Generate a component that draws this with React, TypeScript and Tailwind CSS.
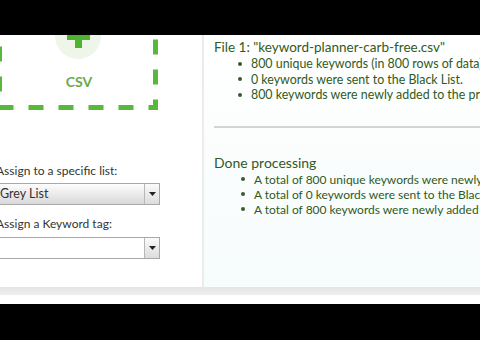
import React from "react";

const GREEN = "text-[#2f5a22]";

function Arrow() {
  return (
    <span className="flex h-full w-[15px] items-center justify-center border-l border-[#b8b8b8] bg-gradient-to-b from-[#fafafa] to-[#dcdcdc]">
      <svg width="7" height="4" viewBox="0 0 7 4">
        <path d="M0 0h7L3.5 4z" fill="#222" />
      </svg>
    </span>
  );
}

function Select({ value, grey }: { value?: string; grey?: boolean }) {
  return (
    <div
      className={`ml-[-4px] flex h-[22px] w-[164px] items-center border border-[#a9a9a9] ${
        grey ? "bg-gradient-to-b from-[#fdfdfd] to-[#d9d9d9]" : "bg-white"
      }`}
    >
      <span className="flex-1 pl-[3px] text-[12.5px] text-[#333]">{value}</span>
      <Arrow />
    </div>
  );
}

export default function App() {
  const file = [
    "800 unique keywords (in 800 rows of data) were found.",
    "0 keywords were sent to the Black List.",
    "800 keywords were newly added to the project.",
  ];
  const done = [
    "A total of 800 unique keywords were newly found.",
    "A total of 0 keywords were sent to the Black List.",
    "A total of 800 keywords were newly added to the project.",
  ];
  return (
    <div className="flex h-[340px] w-[480px] flex-col overflow-hidden bg-black" style={{ fontFamily: "Lato, 'Open Sans', sans-serif" }}>
      <div className="h-[35px] shrink-0 bg-black" />
      <div className="flex h-[269px] shrink-0 flex-col overflow-hidden bg-white">
        <div className="flex h-[252px] overflow-hidden">
          {/* left column */}
          <div className="flex w-[204px] shrink-0 flex-col border-r-2 border-[#ececec]">
            <div className="relative ml-[-3px] mt-[-40px] h-[115px] w-[161px]">
              <svg className="absolute inset-0" width="161" height="115" viewBox="0 0 161 115">
                <rect x="2.5" y="2.5" width="156" height="110" fill="none" stroke="#57b83a" strokeWidth="5" strokeDasharray="15 15" strokeDashoffset="12" />
              </svg>
              <div className="absolute left-[58px] top-[18px] flex h-[46px] w-[46px] items-center justify-center rounded-full bg-[#edf6e9]">
                <svg width="23" height="23" viewBox="0 0 23 23">
                  <rect x="8" y="0" width="7" height="23" fill="#50b330" />
                  <rect x="0" y="8" width="23" height="7" fill="#50b330" />
                </svg>
              </div>
              <div className="absolute left-[3px] w-[158px] top-[76px] text-center text-[14px] font-bold text-[#6aab4c]">CSV</div>
            </div>
            <div className="mt-[54px] ml-[-4px] text-[12px] leading-[14px] text-[#333]">Assign to a specific list:</div>
            <div className="mt-[5px]">
              <Select value="Grey List" grey />
            </div>
            <div className="mt-[12px] ml-[-4px] text-[12px] leading-[14px] text-[#333]">Assign a Keyword tag:</div>
            <div className="mt-[6px]">
              <Select />
            </div>
          </div>
          {/* right column */}
          <div className="flex-1 overflow-hidden bg-gradient-to-b from-white to-[#f7fcfc] pl-[10px]">
            <div className={`mt-[5px] whitespace-nowrap text-[13.5px] leading-[15px] ${GREEN}`}>
              File 1: "keyword-planner-carb-free.csv"
            </div>
            <ul className="ml-[24px] mt-[1px]">
              {file.map((t) => (
                <li key={t} className={`flex items-center whitespace-nowrap text-[12.4px] leading-[15.5px] ${GREEN}`}>
                  <span className="mr-[9px] h-[4px] w-[4px] shrink-0 rounded-full bg-[#3a5a30]" />
                  {t}
                </li>
              ))}
            </ul>
            <div className="mt-[23px] h-[2px] w-full bg-[#d4d4d4]" />
            <div className={`mt-[27px] whitespace-nowrap text-[14px] leading-[16px] ${GREEN}`}>Done processing</div>
            <ul className="ml-[27px] mt-[1px]">
              {done.map((t) => (
                <li key={t} className={`flex items-center whitespace-nowrap text-[12px] leading-[15px] ${GREEN}`}>
                  <span className="mr-[9px] h-[4px] w-[4px] shrink-0 rounded-full bg-[#3a5a30]" />
                  {t}
                </li>
              ))}
            </ul>
          </div>
        </div>
        <div className="h-[8px] bg-gradient-to-b from-[#e4e4e4] to-[#efefef]" />
        <div className="flex-1 bg-white" />
      </div>
      <div className="flex-1 bg-black" />
    </div>
  );
}
